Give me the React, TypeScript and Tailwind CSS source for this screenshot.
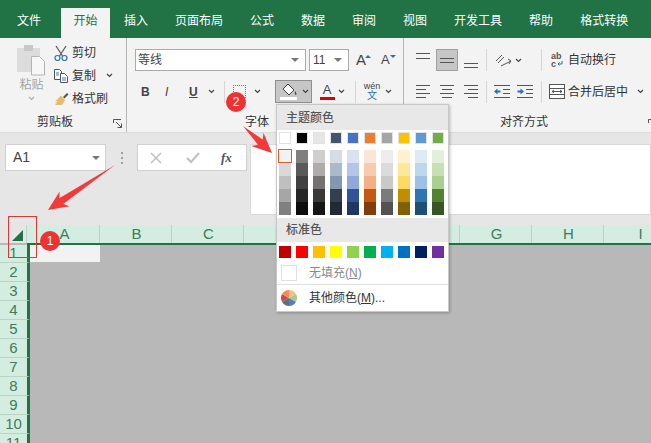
import type { ReactNode } from 'react'

const themeTop = ['#ffffff', '#000000', '#e7e6e6', '#44546a', '#4472c4', '#ed7d31', '#a5a5a5', '#ffc000', '#5b9bd5', '#70ad47']
const themeShades = [
  ['#f2f2f2', '#d9d9d9', '#bfbfbf', '#a6a6a6', '#808080'],
  ['#7f7f7f', '#595959', '#404040', '#262626', '#0d0d0d'],
  ['#d0cece', '#aeabab', '#757171', '#3a3838', '#171616'],
  ['#d6dce4', '#acb9ca', '#8497b0', '#333f4f', '#222b35'],
  ['#d9e1f2', '#b4c6e7', '#8ea9db', '#305496', '#203764'],
  ['#fce4d6', '#f8cbad', '#f4b084', '#c65911', '#833c0c'],
  ['#ededed', '#dbdbdb', '#c9c9c9', '#7b7b7b', '#525252'],
  ['#fff2cc', '#ffe699', '#ffd966', '#bf8f00', '#806000'],
  ['#ddebf7', '#bdd7ee', '#9bc2e6', '#2f75b5', '#1f4e78'],
  ['#e2efda', '#c6e0b4', '#a9d08e', '#548235', '#375623'],
]
const standard = ['#c00000', '#ff0000', '#ffc000', '#ffff00', '#92d050', '#00b050', '#00b0f0', '#0070c0', '#002060', '#7030a0']
const tabs = ['插入', '页面布局', '公式', '数据', '审阅', '视图', '开发工具', '帮助', '格式转换']
const columns = ['B', 'C', 'D', 'E', 'F', 'G', 'H', 'I']
const rows = ['2', '3', '4', '5', '6', '7', '8', '9', '10', '11']

function Chevron({ className = '' }: { className?: string }) {
  return (
    <svg width="7" height="5" viewBox="0 0 7 5" className={`shrink-0 ${className}`}>
      <path d="M1 1l2.5 2.5L6 1" fill="none" stroke="#444" strokeWidth="1.2" />
    </svg>
  )
}

function Caret() {
  return <span className="h-0 w-0 border-x-[4px] border-t-[4px] border-x-transparent border-t-[#777]" />
}

function Lines({ widths, y, anchor = 'left' }: { widths: number[]; y: number[]; anchor?: 'left' | 'center' | 'right' }) {
  return (
    <svg width="14" height="18" viewBox="0 0 14 18" className="shrink-0">
      {widths.map((w, i) => {
        const x = anchor === 'left' ? 0 : anchor === 'right' ? 14 - w : (14 - w) / 2
        return <rect key={i} x={x} y={y[i]} width={w} height="1" fill="#555" />
      })}
    </svg>
  )
}

function VSep({ className = '' }: { className?: string }) {
  return <span className={`h-[22px] w-px shrink-0 bg-[#d5d5d5] ${className}`} />
}

function GroupLabel({ children, className = '' }: { children: ReactNode; className?: string }) {
  return <div className={`text-center text-[12px] leading-[16px] text-[#333] ${className}`}>{children}</div>
}

function Launcher({ className = '' }: { className?: string }) {
  return (
    <svg width="9" height="9" viewBox="0 0 9 9" className={className}>
      <path d="M.5 4V.5H8M8.5 8.5L3 3M8.5 4.5v4h-4" fill="none" stroke="#555" />
    </svg>
  )
}

function Clipboard() {
  return (
    <div className="relative flex h-[94px] w-[127px] shrink-0 border-r border-[#b5b5b5]">
      <div className="ml-[17px] mt-[7px] flex w-[29px] flex-col items-center">
        <svg width="29" height="31" viewBox="0 0 29 31">
          <rect x="0" y="3" width="23" height="24" fill="#dcdcdc" />
          <rect x="7" y="0" width="9" height="6" fill="#c8c8c8" />
          <path d="M14.5 11.5h8l5 5v13.500h-13z" fill="#f7f7f7" stroke="#b4b4b4" />
        </svg>
        <span className="mt-[1px] text-[12px] leading-[16px] text-[#a3a3a3]">粘贴</span>
        <Chevron className="mt-[3px] opacity-40" />
      </div>
      <div className="ml-[8px] mt-[3px] flex flex-col text-[12px] leading-[16px] text-[#333]">
        <div className="flex h-[23px] items-center">
          <svg width="14" height="16" viewBox="0 0 14 16" className="mr-[4px]">
            <path d="M2 1l6.500 10M12 1L5.500 11" stroke="#555" fill="none" strokeWidth="1.200" />
            <circle cx="3.500" cy="13" r="2.500" fill="none" stroke="#2f6fb0" strokeWidth="1.200" />
            <circle cx="10.500" cy="13" r="2.500" fill="none" stroke="#2f6fb0" strokeWidth="1.200" />
          </svg>
          剪切
        </div>
        <div className="flex h-[23px] items-center">
          <svg width="14" height="14" viewBox="0 0 14 14" className="mr-[4px]">
            <path d="M.5.500h5l2 2v8h-7z" fill="#fff" stroke="#555" />
            <path d="M6.500 4.500h4l3 3v6h-7z" fill="#fff" stroke="#555" />
            <path d="M2 4h3M2 6h3M8 9h4M8 11h4" stroke="#3b78b8" />
          </svg>
          复制
          <Chevron className="ml-[10px]" />
        </div>
        <div className="flex h-[23px] items-center">
          <svg width="15" height="14" viewBox="0 0 15 14" className="mr-[3px]">
            <path d="M9 5l4-4 1.500 1.500-4 4z" fill="#555" />
            <path d="M7 3.500l4 4.500-3 5H1l2-2-2 .500 3-2.500-3 .500z" fill="#e5bb6c" />
          </svg>
          格式刷
        </div>
      </div>
      <GroupLabel className="absolute bottom-[2px] left-[37px]">剪贴板</GroupLabel>
      <Launcher className="absolute bottom-[4px] right-[4px]" />
    </div>
  )
}

function FontGroup() {
  return (
    <div className="relative h-[94px] w-[277px] shrink-0 border-r border-[#b5b5b5] pt-[11px] text-[#444]">
      <div className="flex h-[22px] items-stretch">
        <div className="ml-[8px] flex w-[171px] items-center justify-between border border-[#ababab] bg-white pl-[2px] pr-[6px] text-[12px]">
          等线
          <Caret />
        </div>
        <div className="ml-[3px] flex w-[40px] items-center justify-between border border-[#ababab] bg-white pl-[3px] pr-[6px] text-[12px]">
          11
          <Caret />
        </div>
        <div className="ml-[7px] flex items-center text-[15px]">
          A<span className="mb-[8px] ml-[-1px] h-0 w-0 border-x-[3px] border-b-[3px] border-x-transparent border-b-[#2f6fb0]" />
        </div>
        <div className="ml-[10px] flex items-center text-[13px]">
          A<span className="mb-[8px] h-0 w-0 border-x-[3px] border-t-[3px] border-x-transparent border-t-[#2f6fb0]" />
        </div>
      </div>
      <div className="mt-[9px] flex h-[23px] items-center text-[12px]">
        <span className="ml-[14px] w-[8px] font-bold">B</span>
        <span className="ml-[16px] w-[8px] italic">I</span>
        <span className="ml-[16px] w-[8px] font-bold underline">U</span>
        <Chevron className="ml-[11px]" />
        <VSep className="ml-[9px]" />
        <span className="ml-[8px] h-[13px] w-[13px] border border-dotted border-[#777]" />
        <Chevron className="ml-[8px]" />
        <div className="ml-[14px] flex h-[23px] w-[37px] shrink-0 items-center gap-[4px] border border-[#8f8f8f] bg-[#c6c6c6] pl-[4px]">
          <svg width="18" height="17" viewBox="0 0 18 17">
            <path d="M8 1l6 6-5 5-6-6z" fill="#fff" stroke="#444" />
            <path d="M15 8c1.500 2 2 3 1 4-1 0-1.500-2-1-4z" fill="#444" />
            <rect x="0" y="14" width="17" height="3" fill="#fff" />
          </svg>
          <Chevron />
        </div>
        <div className="ml-[8px] flex h-[18px] w-[14px] flex-col items-center">
          <span className="text-[13px] leading-[14px]">A</span>
          <span className="h-[3px] w-[15px] shrink-0 bg-[#e00000]" />
        </div>
        <Chevron className="ml-[4px]" />
        <VSep className="ml-[10px]" />
        <div className="ml-[8px] flex w-[16px] flex-col items-center leading-none">
          <span className="text-[9px]">wén</span>
          <span className="text-[10px] text-[#2f6fb0]">文</span>
        </div>
        <Chevron className="ml-[5px]" />
      </div>
      <GroupLabel className="absolute bottom-[2px] left-[118px]">字体</GroupLabel>
    </div>
  )
}

function AlignGroup() {
  return (
    <div className="relative h-[94px] flex-1 pt-[11px] text-[12px] text-[#333]">
      <div className="flex h-[22px] items-center">
        <span className="ml-[12px]">
          <Lines widths={[14, 14]} y={[2, 7]} />
        </span>
        <span className="ml-[6px] flex h-[22px] w-[22px] items-center justify-center border border-[#a0a0a0] bg-[#c6c6c6]">
          <Lines widths={[14, 14]} y={[7, 11]} />
        </span>
        <span className="ml-[6px]">
          <Lines widths={[14, 14]} y={[12, 16]} />
        </span>
        <VSep className="ml-[8px]" />
        <svg width="17" height="16" viewBox="0 0 17 16" className="ml-[8px]">
          <path d="M1 9l6-6M3 11l6-6" stroke="#555" fill="none" />
          <path d="M6 14l10-5M13 7l3 2-2 3" stroke="#555" fill="none" />
        </svg>
        <Chevron className="ml-[3px]" />
        <VSep className="ml-[19px]" />
        <div className="ml-[9px] flex w-[14px] flex-col text-[9px] font-bold leading-[8px] text-[#555]">
          <span>ab</span>
          <span className="flex items-center">
            c
            <svg width="6" height="6" viewBox="0 0 6 6" className="ml-[1px]">
              <path d="M5 0v3H1M2.500 1.500L1 3l1.500 1.500" fill="none" stroke="#2f6fb0" />
            </svg>
          </span>
        </div>
        <span className="ml-[3px]">自动换行</span>
      </div>
      <div className="mt-[9px] flex h-[23px] items-center">
        <span className="ml-[12px]">
          <Lines widths={[14, 10, 14, 10]} y={[2, 6, 10, 14]} />
        </span>
        <span className="ml-[10px]">
          <Lines widths={[14, 10, 14, 10]} y={[2, 6, 10, 14]} anchor="center" />
        </span>
        <span className="ml-[10px]">
          <Lines widths={[14, 10, 14, 10]} y={[2, 6, 10, 14]} anchor="right" />
        </span>
        <VSep className="ml-[8px]" />
        <svg width="16" height="14" viewBox="0 0 16 14" className="ml-[7px]">
          <path d="M0 .500h16M9 4.500h7M9 8.500h7M0 12.500h16" stroke="#555" />
          <path d="M0 6.500l3.500-3v2h3v2h-3v2z" fill="#2f6fb0" />
        </svg>
        <svg width="16" height="14" viewBox="0 0 16 14" className="ml-[7px]">
          <path d="M0 .500h16M9 4.500h7M9 8.500h7M0 12.500h16" stroke="#555" />
          <path d="M7 6.500l-3.500-3v2h-3v2h3v2z" fill="#2f6fb0" />
        </svg>
        <VSep className="ml-[8px]" />
        <svg width="16" height="15" viewBox="0 0 16 15" className="ml-[7px]">
          <rect x=".5" y=".5" width="15" height="14" fill="#fff" stroke="#555" />
          <path d="M.5 4.500h15M.5 10.500h15M3 7.500h10M3 7.500l2-1.500M3 7.500l2 1.500M13 7.500l-2-1.500M13 7.500l-2 1.500" stroke="#555" fill="none" />
        </svg>
        <span className="ml-[3px]">合并后居中</span>
        <Chevron className="ml-[9px]" />
      </div>
      <GroupLabel className="absolute bottom-[2px] left-[96px]">对齐方式</GroupLabel>
      <Launcher className="absolute bottom-[4px] right-[-6px]" />
    </div>
  )
}

function FillMenu() {
  return (
    <div className="absolute left-[276px] top-[104px] flex h-[208px] w-[173px] flex-col border border-[#c8c8c8] bg-white text-[12px] shadow-[1px_1px_3px_rgba(0,0,0,0.25)]">
      <div className="flex h-[25px] shrink-0 items-center bg-[#e8e8e8] pl-[9px] font-medium text-[#555]">主题颜色</div>
      <div className="ml-[2px] mt-[2px] flex gap-[5px]">
        {themeTop.map(c => (
          <span key={c} className="h-[12px] w-[12px] border border-[#e2e2e2]" style={{ backgroundColor: c }} />
        ))}
      </div>
      <div className="ml-[2px] mt-[6px] flex gap-[5px]">
        {themeShades.map((col, i) => (
          <div key={i} className="relative flex w-[12px] flex-col">
            {col.map(c => (
              <span key={c} className="h-[13px] w-[12px]" style={{ backgroundColor: c }} />
            ))}
            {i === 0 && <span className="absolute left-[-1px] top-[-1px] h-[14px] w-[14px] border-[1.5px] border-[#d2602a] bg-[#f2f2f2]" />}
          </div>
        ))}
      </div>
      <div className="mt-[3px] flex h-[24px] shrink-0 items-center bg-[#e8e8e8] pl-[9px] font-medium text-[#555]">标准色</div>
      <div className="ml-[2px] mt-[4px] flex gap-[5px]">
        {standard.map(c => (
          <span key={c} className="h-[12px] w-[12px]" style={{ backgroundColor: c }} />
        ))}
      </div>
      <div className="mt-[6px] flex h-[21px] shrink-0 items-center border-b border-[#e2e2e2] pb-[2px]">
        <span className="ml-[4px] h-[16px] w-[16px] border border-[#e0e0e0]" />
        <span className="ml-[12px] text-[#8a8a8a]">
          无填充(<span className="underline">N</span>)
        </span>
      </div>
      <div className="flex flex-1 items-center text-[#333]">
        <svg width="16" height="16" viewBox="0 0 16 16" className="ml-[4px]">
          <path d="M8 8V0a8 8 0 0 1 6.900 4z" fill="#e4c48c" />
          <path d="M8 8l6.900-4a8 8 0 0 1 0 8z" fill="#b4c48c" />
          <path d="M8 8l6.900 4A8 8 0 0 1 8 16z" fill="#4f81bd" />
          <path d="M8 8v8a8 8 0 0 1-6.900-4z" fill="#5f6f7f" />
          <path d="M8 8l-6.900 4a8 8 0 0 1 0-8z" fill="#c0504d" />
          <path d="M8 8L1.100 4A8 8 0 0 1 8 0z" fill="#ed9050" />
        </svg>
        <span className="ml-[12px]">
          其他颜色(<span className="underline">M</span>)...
        </span>
      </div>
    </div>
  )
}

function RedArrow({ x1, y1, x2, y2 }: { x1: number; y1: number; x2: number; y2: number }) {
  const dx = x2 - x1
  const dy = y2 - y1
  const len = Math.hypot(dx, dy)
  const ux = dx / len
  const uy = dy / len
  const bx = x2 - ux * 20
  const by = y2 - uy * 20
  const cx = x2 - ux * 16
  const cy = y2 - uy * 16
  const pts = [
    [x1, y1],
    [cx - uy * 3.5, cy + ux * 3.5],
    [bx - uy * 9, by + ux * 9],
    [x2, y2],
    [bx + uy * 9, by - ux * 9],
    [cx + uy * 3.5, cy - ux * 3.5],
  ]
  return <polygon points={pts.map(p => p.join(',')).join(' ')} fill="#f23a3a" />
}

function Badge({ n, className }: { n: number; className: string }) {
  return (
    <span className={`absolute flex h-[20px] w-[20px] items-center justify-center rounded-full bg-[#ee3234] text-[12px] font-medium text-white ${className}`}>
      {n}
    </span>
  )
}

export default function App() {
  return (
    <div className="relative h-[443px] w-[651px] overflow-hidden bg-[#b8b8b8] font-['Liberation_Sans','Noto_Sans_CJK_SC',sans-serif]">
      {/* tab strip */}
      <div className="flex h-[38px] items-end bg-[#217346] text-[12px] text-white">
        <div className="ml-[5px] flex h-[30px] w-[48px] items-center justify-center pb-[4px]">文件</div>
        <div className="ml-[8px] flex h-[30px] w-[49px] items-center justify-center bg-[#f3f3f3] pb-[4px] text-[#217346]">开始</div>
        <div className="ml-[2px] flex gap-[3px]">
          {tabs.map(t => (
            <div key={t} className="flex h-[30px] items-center px-[12px] pb-[4px]">
              {t}
            </div>
          ))}
        </div>
      </div>

      {/* ribbon */}
      <div className="flex h-[94px] bg-[#f3f3f3]">
        <Clipboard />
        <FontGroup />
        <AlignGroup />
      </div>

      {/* formula bar */}
      <div className="flex h-[93px] items-start border-t border-[#dadada] bg-[#e6e6e6] pt-[11px]">
        <div className="ml-[5px] flex h-[27px] w-[101px] items-center justify-between border border-[#d0d0d0] bg-white pl-[7px] pr-[5px] text-[14px] text-[#444]">
          A1
          <Caret />
        </div>
        <div className="ml-[15px] mt-[8px] flex w-[2px] flex-col gap-[3px]">
          <span className="h-[2px] w-[2px] bg-[#a0a0a0]" />
          <span className="h-[2px] w-[2px] bg-[#a0a0a0]" />
          <span className="h-[2px] w-[2px] bg-[#a0a0a0]" />
        </div>
        <div className="ml-[14px] flex h-[27px] w-[110px] items-center border border-[#d0d0d0] bg-white text-[#b5b5b5]">
          <svg width="12" height="12" viewBox="0 0 12 12" className="ml-[12px]">
            <path d="M1 1l10 10M11 1L1 11" stroke="#c0c0c0" strokeWidth="1.500" />
          </svg>
          <svg width="14" height="12" viewBox="0 0 14 12" className="ml-[24px]">
            <path d="M1 6l4 4 8-9" stroke="#c0c0c0" strokeWidth="2" fill="none" />
          </svg>
          <span className="ml-[21px] font-['Liberation_Serif',serif] text-[13px] font-bold italic text-[#555]">fx</span>
        </div>
        <div className="ml-[3px] h-[71px] flex-1 border border-[#d8d8d8] bg-white" />
      </div>

      {/* sheet */}
      <div className="flex h-[18px] bg-[#e6e6e6] text-[15px] text-[#3f7a5f]">
        <div className="flex h-[18px] w-[27px] shrink-0 items-end justify-end border-r border-[#bcd3c5] pb-[2px] pr-[3px]">
          <svg width="11" height="11" viewBox="0 0 11 11">
            <path d="M11 0v11H0z" fill="#217346" />
          </svg>
        </div>
        <div className="flex w-[73px] shrink-0 items-center justify-center border-r border-[#b7d5c4] bg-[#d3eee0] pl-[3px]">A</div>
        {columns.map(c => (
          <div key={c} className="flex w-[72px] shrink-0 items-center justify-center border-r border-[#b7d5c4] bg-[#d3eee0] pl-[2px]">
            {c}
          </div>
        ))}
      </div>
      <div className="flex">
        <div className="w-[30px] shrink-0 text-[15px] text-[#3f7a5f]">
          <div className="ml-[27px] h-[2px] w-[3px] bg-[#217346]" />
          {['1', ...rows].map(r => (
            <div
              key={r}
              className={`flex w-[30px] items-center justify-center border-b border-r-[3px] border-b-[#b9d4c5] border-r-[#217346] bg-[#d3eee0] ${r === '1' ? 'h-[18px]' : 'h-[19px]'}`}
            >
              {r}
            </div>
          ))}
        </div>
        <div className="flex-1">
          <div className="h-[2px] bg-[#217346]" />
          <div className="h-[17px] w-[70px] bg-[#f2f2f2]" />
        </div>
      </div>

      <FillMenu />

      {/* annotations */}
      <span className="absolute left-[8px] top-[216px] h-[42px] w-[29px] border border-[#d83a3a]" />
      <svg width="651" height="443" viewBox="0 0 651 443" className="pointer-events-none absolute left-0 top-0">
        <RedArrow x1={115} y1={165} x2={48} y2={210} />
        <RedArrow x1={243} y1={126} x2={272} y2={153} />
      </svg>
      <Badge n={1} className="left-[40px] top-[231px]" />
      <Badge n={2} className="left-[226px] top-[92px]" />
    </div>
  )
}
